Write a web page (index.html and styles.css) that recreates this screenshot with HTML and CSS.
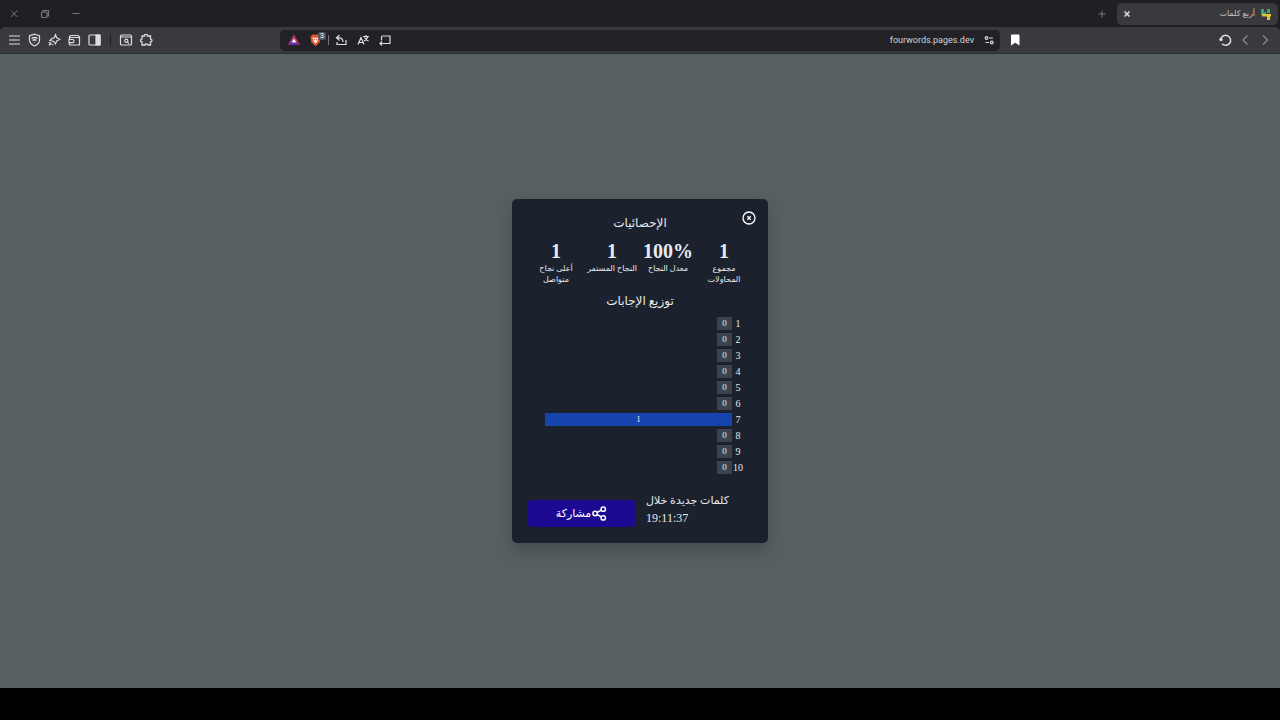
FILE: index.html
```html
<!DOCTYPE html>
<html lang="ar" dir="rtl">

<head>
  <meta charset="utf-8">
  <meta name="viewport" content="width=device-width">
  <title>أربع كلمات</title>
  <link rel="stylesheet" href="styles.css">
</head>

<body>
  <header class="browser">
    <div class="tab-bar">
      <div class="tab">
        <svg class="favicon" viewBox="0 0 10 12"><path d="M0 1h3v3h2v3H0zM6 1h3v4H6z" fill="#35a878" stroke="none"/><path d="M1 6h9v2.500H9V12H6V8.500H1z" fill="#e0c23a" stroke="none"/></svg>
        <span class="tab-title">أربع كلمات</span>
        <button class="tab-close" aria-label="إغلاق"><svg class="icon" viewBox="0 0 16 16"><path d="M5.500 5.500l5 5M10.500 5.500l-5 5" stroke-width="1.500"/></svg></button>
      </div>
      <button class="new-tab" aria-label="جديد"><svg class="icon" viewBox="0 0 16 16"><path d="M8 4.500v7M4.500 8h7" stroke-width="1"/></svg></button>
      <div class="window-buttons">
        <button aria-label="تصغير"><svg class="icon" viewBox="0 0 16 16"><path d="M4.500 7.500h7" stroke-width="1"/></svg></button>
        <button aria-label="استعادة"><svg class="icon" viewBox="0 0 16 16"><rect x="4.500" y="6" width="5.500" height="5.500" rx="1"/><path d="M6 6V4.500h5.500v5.500H10"/></svg></button>
        <button aria-label="إغلاق"><svg class="icon" viewBox="0 0 16 16"><path d="M5 4.500l6.500 6.500M11.500 4.500L5 11" stroke-width="1"/></svg></button>
      </div>
    </div>

    <div class="toolbar">
      <div class="tools nav-tools">
        <button class="dim" aria-label="رجوع"><svg class="icon" viewBox="0 0 16 16"><path d="M6 3.500L10.500 8 6 12.500"/></svg></button>
        <button class="dim" aria-label="تقدم"><svg class="icon" viewBox="0 0 16 16"><path d="M10.500 3.500L6 8l4.500 4.500"/></svg></button>
        <button aria-label="تحديث"><svg class="icon" viewBox="0 0 16 16"><path d="M5 11.800A5 5 0 1 0 3.800 7" stroke-width="1.500"/><circle cx="4" cy="7.500" r="1.700" fill="currentColor" stroke="none"/></svg></button>
        <button class="bookmark" aria-label="إشارة"><svg class="icon" viewBox="0 0 16 16"><path d="M4 3.500a1 1 0 0 1 1-1h6.500a1 1 0 0 1 1 1V13.500L8.200 10.800 4 13.500z" fill="currentColor" stroke="none"/></svg></button>
      </div>

      <div class="address">
        <button aria-label="إعدادات الموقع"><svg class="icon" viewBox="0 0 16 16"><circle cx="5.500" cy="6" r="1.300"/><path d="M8 6h4M4.500 10.500H8"/><circle cx="10.800" cy="10.500" r="1.300"/></svg></button>
        <input class="url" type="text" dir="ltr" value="fourwords.pages.dev" aria-label="العنوان">
        <div class="tools address-tools">
          <button aria-label="إرسال"><svg class="icon" viewBox="0 0 16 16"><path d="M4.500 8.500V5a1 1 0 0 1 1-1H13v7M3 11.500h10.500"/><path d="M5 9.500l-2 2 2 2"/></svg></button>
          <button aria-label="ترجمة"><svg class="icon" viewBox="0 0 16 16"><path d="M3 12.500L6 5.500l3 7M4 10.500h4M8 4.500h6M11 3v1.500M9 9c2-1 3.300-2.500 3.800-4.500M9.500 5.500c.8 1.500 2 2.500 4 3.500"/></svg></button>
          <button aria-label="مشاركة"><svg class="icon" viewBox="0 0 16 16"><path d="M6.500 3L3.500 5.800l3 2.700M3.800 5.800H6c3 0 4 1.700 4 4.200M4 10v2.500h9V8"/></svg></button>
          <span class="divider light"></span>
          <button class="shields" aria-label="الدروع"><svg class="icon" viewBox="0 0 16 16"><path d="M4.500 2.500h6l2 2.300-.8 5.400L7.500 14.200 3.300 10.200l-.8-5.400z" fill="#e5532d" stroke="none"/><path d="M4.500 5.500l3 .6 3-.6-.8 3.200-2.200 3-2.200-3z" fill="#fff" stroke="none"/><path d="M5.500 7.200l1.500.8M9.500 7.200L8 8" stroke="#e5532d"/></svg><span class="badge">3</span></button>
          <button aria-label="المكافآت"><svg class="icon" viewBox="0 0 16 16"><path d="M8 2.500l6 10.500H2z" fill="#c42f4b" stroke="none"/><path d="M8 2.500L2 13l6-4z" fill="#8d3a9c" stroke="none"/><path d="M2 13h12L8 9z" fill="#5d2fa0" stroke="none"/><path d="M8 6.500l2.300 4H5.700z" fill="#fff" stroke="none"/></svg></button>
        </div>
      </div>

      <div class="tools side-tools">
        <button aria-label="الإضافات"><svg class="icon" viewBox="0 0 16 16"><path d="M4 4h2.500c-.5-2.300 3.500-2.300 3 0h3v3c2 .2 2 2.800 0 3v3H10c0-1.600-3-1.600-3 0H4v-3c-2-.2-2-2.800 0-3z" stroke-width="1.300"/></svg></button>
        <button aria-label="بحث"><svg class="icon" viewBox="0 0 16 16"><rect x="2.500" y="3" width="11" height="10" rx="1"/><path d="M2.500 5h11M9.500 10.200l1.500 1.500"/><circle cx="8.300" cy="8.800" r="1.600"/></svg></button>
        <span class="divider"></span>
        <button aria-label="الشريط الجانبي"><svg class="icon" viewBox="0 0 16 16"><rect x="3" y="3" width="11" height="10" rx="1"/><path d="M10 3h4v10h-4z" fill="currentColor"/></svg></button>
        <button aria-label="المحفظة"><svg class="icon" viewBox="0 0 16 16"><path d="M3.500 7V4.500l1-1H12l1.500 1.500v8h-10v-2M4 5.500h9.500"/><path d="M3 7.500h3.500a1.600 1.600 0 0 1 0 3.200H3z"/></svg></button>
        <button aria-label="المساعد"><svg class="icon" viewBox="0 0 16 16"><path d="M9.500 2.800l1.200 3 3 1.400-3 1.700-1.200 3-1.800-2.400L4 8.500l2.200-2.200L8 6z"/><path d="M3.500 10v1M3 13.200l2.200-2M6.500 12.200v1" stroke-width="1.700"/></svg></button>
        <button aria-label="الحماية"><svg class="icon" viewBox="0 0 16 16"><path d="M8.500 2.200l5 1.600v4c0 3-2 5-5 6.200-3-1.200-5-3.200-5-6.200v-4z"/><path d="M5.500 6.500c2-1.400 4-1.400 6 0M6.500 8.500c1.300-.9 2.700-.9 4 0M8.500 10.200v.6" stroke-width="1.500"/></svg></button>
        <button aria-label="القائمة"><svg class="icon" viewBox="0 0 16 16"><path d="M3 4h11M3 8h11M3 12h11" stroke-width="1.200"/></svg></button>
      </div>
    </div>
  </header>

  <main class="page">
    <section class="modal">
      <button class="close" aria-label="إغلاق"><svg viewBox="0 0 24 24"><circle cx="12" cy="12" r="9"/><path d="M9.500 9.500l5 5M14.500 9.500l-5 5"/></svg></button>
      <h2>الإحصائيات</h2>
      <div class="stats">
        <div class="stat"><strong>1</strong><span>مجموع المحاولات</span></div>
        <div class="stat"><strong dir="ltr">100%</strong><span>معدل النجاح</span></div>
        <div class="stat"><strong>1</strong><span>النجاح المستمر</span></div>
        <div class="stat"><strong>1</strong><span>أعلى نجاح متواصل</span></div>
      </div>

      <h2>توزيع الإجابات</h2>
      <div class="chart">
        <div class="row"><span class="guess">1</span><div class="track"><div class="bar" style="width: 8%">0</div></div></div>
        <div class="row"><span class="guess">2</span><div class="track"><div class="bar" style="width: 8%">0</div></div></div>
        <div class="row"><span class="guess">3</span><div class="track"><div class="bar" style="width: 8%">0</div></div></div>
        <div class="row"><span class="guess">4</span><div class="track"><div class="bar" style="width: 8%">0</div></div></div>
        <div class="row"><span class="guess">5</span><div class="track"><div class="bar" style="width: 8%">0</div></div></div>
        <div class="row"><span class="guess">6</span><div class="track"><div class="bar" style="width: 8%">0</div></div></div>
        <div class="row"><span class="guess">7</span><div class="track"><div class="bar active" style="width: 100%">1</div></div></div>
        <div class="row"><span class="guess">8</span><div class="track"><div class="bar" style="width: 8%">0</div></div></div>
        <div class="row"><span class="guess">9</span><div class="track"><div class="bar" style="width: 8%">0</div></div></div>
        <div class="row"><span class="guess">10</span><div class="track"><div class="bar" style="width: 8%">0</div></div></div>
      </div>

      <div class="modal-footer">
        <div class="countdown">
          <h3>كلمات جديدة خلال</h3>
          <time dir="ltr">19:11:37</time>
        </div>
        <button class="share">
          <svg viewBox="0 0 24 24"><circle cx="18" cy="5" r="3.500"/><circle cx="5" cy="12" r="3.500"/><circle cx="18" cy="19" r="3.500"/><path d="M8 10.400l7-3.800M8 13.600l7 3.800"/></svg>
          <span>مشاركة</span>
        </button>
      </div>
    </section>
  </main>

  <div class="taskbar"></div>
</body>

</html>
```
FILE: styles.css
```css
* {
  box-sizing: border-box;
}

body {
  margin: 0;
  min-height: 100vh;
  display: flex;
  flex-direction: column;
  background-color: #000;
  color: #e8eaee;
  font-family: "Liberation Serif", "DejaVu Sans", serif;
}

button {
  display: flex;
  align-items: center;
  justify-content: center;
  padding: 0;
  border: none;
  background: none;
  color: inherit;
  font-family: inherit;
  cursor: pointer;
}

svg {
  fill: none;
  stroke: currentColor;
  stroke-width: 1.2;
}

.icon {
  width: 16px;
  height: 16px;
}

/* browser bars */
.browser {
  background-color: #201f24;
  color: #dddce2;
  font-family: Roboto, "DejaVu Sans", sans-serif;
}

.tab-bar {
  display: flex;
  align-items: center;
  height: 27px;
  padding: 0 2px 0 6px;
}

.tab {
  display: flex;
  align-items: center;
  gap: 6px;
  width: 161px;
  height: 22px;
  padding: 0 7px 0 2px;
  border-radius: 5px;
  background-color: #3a393e;
}

.favicon {
  width: 10px;
  height: 12px;
}

.tab-title {
  flex: 1;
  font-size: 8px;
  color: #c4c3c8;
}

.new-tab {
  margin-right: 7px;
  color: #78777c;
}

.window-buttons {
  display: flex;
  gap: 15px;
  margin-right: auto;
  color: #78777c;
}

.toolbar {
  display: grid;
  grid-template-columns: 280px 1fr 280px;
  align-items: center;
  height: 27px;
  background-color: #3a393e;
  border-bottom: 1px solid #302f34;
  border-radius: 5px 5px 0 0;
}

.tools {
  display: flex;
  align-items: center;
}

.tools button {
  position: relative;
  width: 20px;
  height: 20px;
}

.nav-tools {
  padding: 0 5px;
}

.nav-tools .dim {
  color: #8b8a90;
}

.nav-tools .bookmark {
  margin-right: auto;
  color: #fff;
}

.side-tools {
  justify-content: flex-end;
  padding-left: 4px;
}

.divider {
  width: 1px;
  height: 10px;
  margin: 0 5px 0 6px;
  background-color: #201f24;
}

.divider.light {
  margin: 0 1px;
  background-color: #77767c;
}

.address {
  display: flex;
  align-items: center;
  height: 21px;
  padding: 0 3px;
  border-radius: 5px;
  background-color: #222126;
}

.url {
  flex: 1;
  min-width: 0;
  padding: 0 7px;
  border: none;
  outline: none;
  background: none;
  color: #d4d3d8;
  font-family: inherit;
  font-size: 9px;
  text-align: right;
}

.tools.address-tools button {
  width: 22px;
}

.badge {
  position: absolute;
  top: 2px;
  right: 1px;
  width: 8px;
  border-radius: 2px;
  background-color: #55545a;
  color: #fff;
  font-size: 7px;
  line-height: 8px;
}

/* statistics window */
.page {
  flex: 1;
  display: flex;
  align-items: center;
  justify-content: center;
  background-color: #576061;
}

.modal {
  position: relative;
  width: 256px;
  padding: 16px;
  border-radius: 5px;
  background-color: #1b222d;
  box-shadow: 0 8px 16px rgba(0, 0, 0, 0.2);
}

.close {
  position: absolute;
  top: 11px;
  right: 11px;
  color: #fff;
}

.close svg {
  width: 16px;
  height: 16px;
  stroke-width: 2;
}

h2 {
  margin: 0;
  font-size: 12px;
  font-weight: normal;
  line-height: 16px;
  text-align: center;
}

.stats {
  display: grid;
  grid-template-columns: repeat(4, 1fr);
  margin: 8px 0;
}

.stat {
  text-align: center;
}

.stat strong {
  display: block;
  font-size: 20px;
  line-height: 24px;
}

.stat span {
  display: block;
  font-size: 8px;
  line-height: 11px;
}

.chart {
  padding: 6px 8px 0 17px;
  font-size: 10px;
}

.row {
  display: flex;
  align-items: center;
  height: 16px;
}

.guess {
  width: 12px;
  text-align: center;
}

.track {
  flex: 1;
}

.bar {
  height: 13px;
  line-height: 13px;
  background-color: #3a444f;
  text-align: center;
  font-size: 9px;
}

.bar.active {
  background-color: #1644ae;
}

.modal-footer {
  display: flex;
  align-items: flex-end;
  justify-content: space-between;
  margin-top: 16px;
  padding-right: 23px;
}

.countdown h3 {
  margin: 0;
  font-size: 11px;
  font-weight: normal;
  line-height: 18px;
}

.countdown time {
  display: block;
  font-size: 12px;
  line-height: 18px;
}

.share {
  gap: 1px;
  width: 107px;
  height: 27px;
  border-radius: 3px;
  background-color: #1d0a92;
  color: #fff;
  font-size: 11px;
}

.share svg {
  width: 15px;
  height: 15px;
  stroke-width: 2.4;
}

.taskbar {
  height: 32px;
}
```
